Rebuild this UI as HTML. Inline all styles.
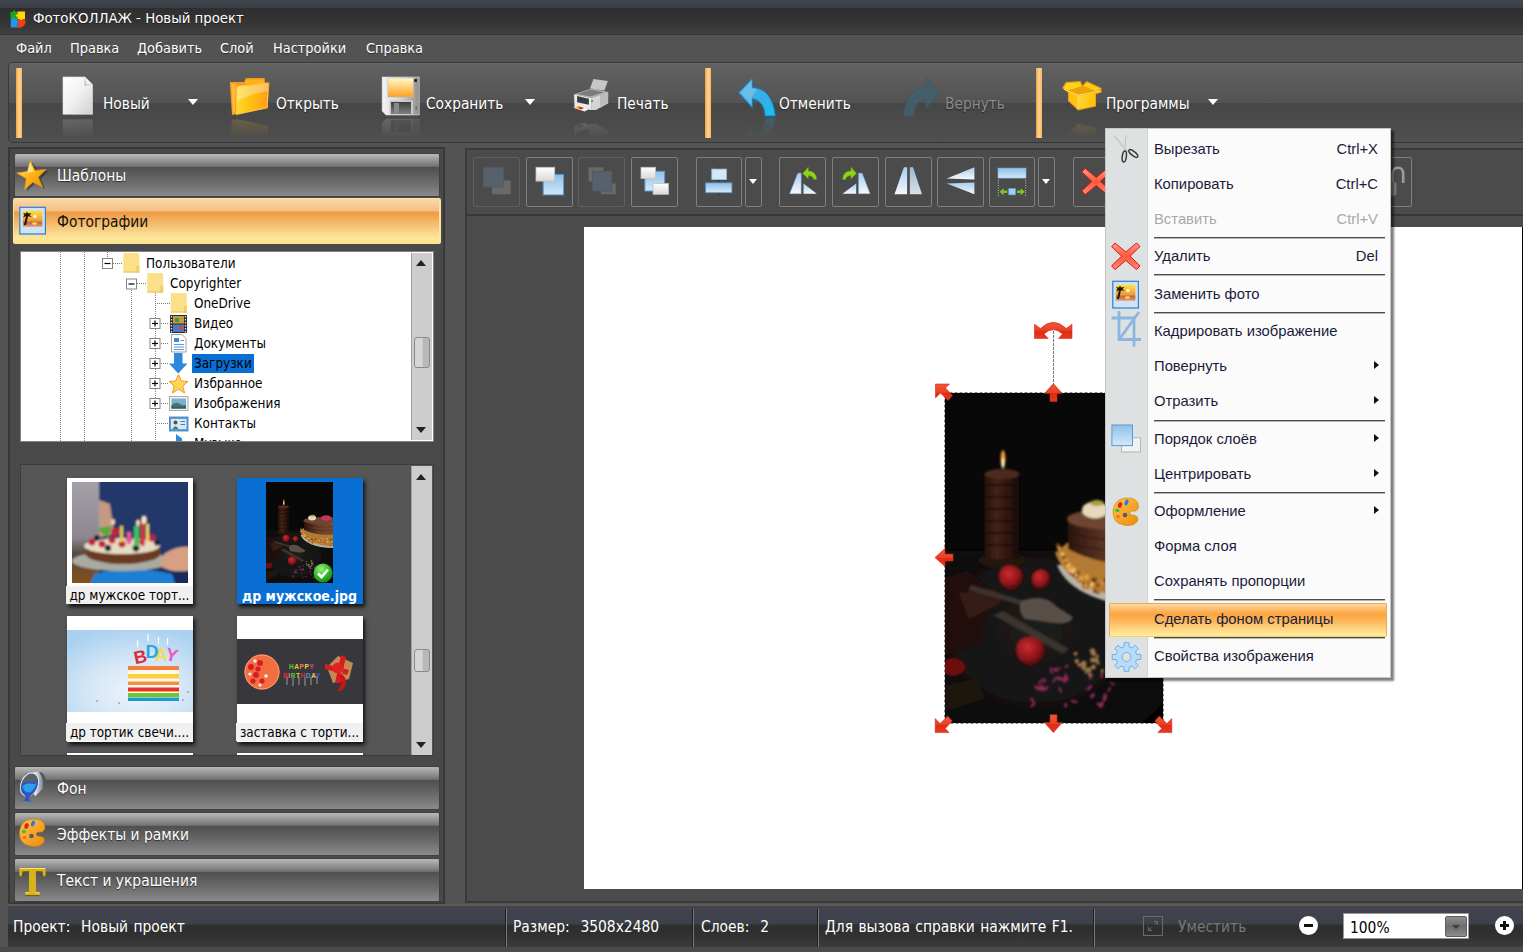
<!DOCTYPE html>
<html lang="ru">
<head>
<meta charset="utf-8">
<title>ФотоКОЛЛАЖ - Новый проект</title>
<style>
html,body{margin:0;padding:0;}
body{width:1523px;height:952px;overflow:hidden;background:#535353;position:relative;font-family:"DejaVu Sans Condensed","DejaVu Sans","Liberation Sans",sans-serif;font-stretch:condensed;font-size:14.4px;color:#fff;}
.abs{position:absolute;}
div,span,svg{position:absolute;box-sizing:border-box;}
.t{white-space:pre;line-height:1;}
/* title */
#topstrip{left:0;top:0;width:1523px;height:8px;background:linear-gradient(#42464f,#3b3d49);}
#title{left:0;top:8px;width:1523px;height:27px;background:linear-gradient(#2e2e2e 0%,#353535 55%,#404040 95%,#343434 96%);}
#menubar{left:0;top:35px;width:1523px;height:28px;background:#535353;}
#menubar .t{top:6px;font-size:14.4px;text-shadow:0 1px 1px rgba(0,0,0,.45);}
/* main toolbar */
#tb{left:8px;top:62px;width:1521px;height:81px;border:1px solid #383838;border-radius:5px;background:linear-gradient(#626262 0%,#535353 50.4%,#464646 50.5%,#505050 100%);box-shadow:inset 0 1px 0 #6a6a6a;}
.obar{top:68px;width:6px;height:70px;background:linear-gradient(90deg,#f0a23c,#ffd596 50%,#f5b563);}
.tbt{font-size:15.3px;top:97px;text-shadow:0 1px 1px rgba(0,0,0,.5);}
.dd{width:0;height:0;border-left:5.5px solid transparent;border-right:5.5px solid transparent;border-top:6px solid #fff;}
/* left panel */
#lp{left:8px;top:147px;width:437px;height:757px;border:2px solid #383838;background:#494949;}
.gbtn{left:14px;width:426px;height:44px;border:1px solid #404040;border-radius:2px;background:linear-gradient(#b8b8b8 0%,#9a9a9a 13%,#737373 29.5%,#4f4f4f 31%,#6a6a6a 66%,#8a8a8a 100%);}
.obtn{left:13px;top:198px;width:428px;height:46px;border-radius:2px;background:linear-gradient(#fad8aa 0%,#f6be84 26%,#ee9a44 31%,#f4b666 52%,#f8d488 74%,#fde89c 90%,#fde284 100%);border:1px solid #fde4a0;border-right-width:2px;}
.bl{left:42px;top:14.500px;font-size:15.4px;text-shadow:0 1px 1px rgba(0,0,0,.6);}
#tree{left:20px;top:251px;width:414px;height:191px;background:#fff;border:1px solid #828282;overflow:hidden;}
.tr{color:#000;font-size:13.4px;margin-top:0px;}
.vd{top:0;width:1px;height:200px;background:repeating-linear-gradient(#888 0 1px,transparent 1px 2px);}
.sb{right:1px;top:1px;width:21px;background:#cdcdcd;border-left:1px solid #a0a0a0;}
.sth{left:2px;width:16px;border:1px solid #8a8a8a;border-radius:3px;background:linear-gradient(90deg,#d6d6d6 50%,#b8b8b8 60%);}
.sa{left:4px;width:0;height:0;border-left:5.5px solid transparent;border-right:5.5px solid transparent;}
.sa.up{border-bottom:6px solid #222;}
.sa.dn{border-top:6px solid #222;}
#thumbs{left:20px;top:464px;width:414px;height:292px;background:#565656;border:1px solid #3c3c3c;overflow:hidden;}
.th{width:126px;height:126px;box-shadow:2px 3px 4px rgba(0,0,0,.8);}
.tl{width:127px;margin-left:-1px;height:18px;font-size:13.4px;color:#000;background:#f0f0f0;text-align:center;padding-top:3px;overflow:hidden;}
/* right panel */
#rp{left:465px;top:148px;width:1070px;height:755px;border:2px solid #3a3a3a;background:#4b4b4b;}
#rtb{left:467px;top:150px;width:1060px;height:66px;border-bottom:2px solid #363636;background:#4b4b4b;}
.b2{top:157px;width:47px;height:50px;border:1px solid #808080;border-radius:2px;}
.b2.dis{border-color:#606060;}
.dd.s{border-left-width:4.5px;border-right-width:4.5px;border-top-width:5px;}
#canvas{left:584px;top:227px;width:938px;height:662px;background:#fff;}
/* status */
#sline{left:8px;top:904px;width:1515px;height:4px;background:linear-gradient(#5a5a5a 50%,#454545 50%);}
#status{left:8px;top:908px;width:1515px;height:39px;background:linear-gradient(#41444f 0%,#3e404b 41%,#303030 43%,#2e2e2e 60%,#3c3c3c 100%);}
.st{margin-left:-8px;top:12px;font-size:15.4px;word-spacing:1px;}
.sd{margin-left:-8px;top:1px;width:2px;height:38px;background:linear-gradient(90deg,#222 50%,#777 50%);}
#fit{left:1135px;top:8px;width:20px;height:20px;border:1px solid #6a6a6a;}
.circ{margin-left:-7px;top:8px;width:19px;height:19px;border-radius:50%;background:#fff;}
#combo{left:1335px;top:5px;width:126px;height:26px;background:#fff;border:1px solid #999;}
#cbtn{right:1px;top:2px;width:22px;height:21px;background:linear-gradient(#8e8e8e,#6c6c6c 50%,#8c8c8c);border:1px solid #5e5e5e;border-radius:2px;}
/* context menu */
#cm{left:1105px;top:128px;width:286px;height:550px;background:#fbfbfb;border:1px solid #c4c4c4;box-shadow:3px 3px 2px rgba(0,0,0,.5);font-family:"Liberation Sans","DejaVu Sans",sans-serif;font-stretch:normal;}
#gut{left:0;top:0;width:42px;height:548px;background:#dde1e1;border-right:1px solid #cfd3d3;}
#hl{left:3px;top:474px;width:278px;height:34px;border:1px solid #e9ad48;border-bottom-color:#f3cf6a;border-radius:2px;background:linear-gradient(#fed8a4 0%,#fdbc6c 16%,#fba540 32%,#fdb85c 55%,#ffd884 80%,#ffec9e 100%);}
.mi{left:48px;font-size:14.8px;color:#1c1c3a;}
.sc{right:12px;font-size:14.8px;color:#1c1c3a;}
.g{color:#a9a9a9;}
.sep{left:48px;width:231px;height:1px;background:#4c4c4c;box-shadow:0 1px 0 rgba(76,76,76,.4);}
.ar{left:267.500px;width:0;height:0;border-top:4.5px solid transparent;border-bottom:4.5px solid transparent;border-left:5px solid #111;}
</style>
</head>
<body>
<div id="topstrip"></div>
<div id="title"><svg style="left:9px;top:1.500px" width="17" height="19" viewBox="9 9.500 17 19">
<path d="M10.500 11.500 H13 Q12.500 9.800 14.200 9.800 Q15.900 9.800 15.400 11.500 H17.500 V18.500 H10.500 Z" fill="#1fa31f"/>
<path d="M17.500 11 H25 V18.500 H22 Q22.500 20 21 20 Q19.500 20 20 18.500 H17.500 V16 Q15.800 16.500 15.800 15 Q15.800 13.500 17.500 14 Z" fill="#ffd800"/>
<path d="M10.800 18.500 H13 Q12.500 17 14 17 Q15.500 17 15 18.500 H17.500 V21 Q19.200 20.500 19.200 22 Q19.200 23.500 17.500 23 V27 H10.800 Z" fill="#1e96ea"/>
<path d="M17.500 18.500 H20 Q19.500 20 21 20 Q22.500 20 22 18.500 H24 Q26.200 19.500 25.500 22 Q24 27 20 27.300 H17.500 V23 Q19.200 23.500 19.200 22 Q19.200 20.500 17.500 21 Z" fill="#f0401a"/>
</svg><span class="t" style="left:33px;top:3px;font-size:14.8px;text-shadow:0 1px 1px rgba(0,0,0,.5);">ФотоКОЛЛАЖ - Новый проект</span></div>
<div id="menubar">
<span class="t" style="left:16px;">Файл</span>
<span class="t" style="left:70px;">Правка</span>
<span class="t" style="left:137px;">Добавить</span>
<span class="t" style="left:220px;">Слой</span>
<span class="t" style="left:273px;">Настройки</span>
<span class="t" style="left:366px;">Справка</span>
</div>
<div id="tb"></div>
<!--TBI-->
<svg id="tbi" style="left:0;top:63px" width="1523" height="79" viewBox="0 63 1523 79">
<defs>
<linearGradient id="gdoc" x1="0" y1="0" x2="1" y2="1"><stop offset="0" stop-color="#fff"/><stop offset=".5" stop-color="#f1f1f1"/><stop offset="1" stop-color="#cfcfcf"/></linearGradient>
<linearGradient id="gfold" x1="0" x2="1"><stop offset="0" stop-color="#ffdb2c"/><stop offset=".45" stop-color="#ffc010"/><stop offset="1" stop-color="#ff9c1e"/></linearGradient>
<linearGradient id="gflp" x1="0" x2="1"><stop offset="0" stop-color="#f4f4f4"/><stop offset=".5" stop-color="#d2d2d2"/><stop offset="1" stop-color="#8e8e8e"/></linearGradient>
<linearGradient id="glab" x1="0" y1="0" x2="0" y2="1"><stop offset="0" stop-color="#fffacc"/><stop offset="1" stop-color="#ffa01e"/></linearGradient>
<linearGradient id="gsh" x1="0" y1="0" x2="0" y2="1"><stop offset="0" stop-color="#3c3c3c"/><stop offset="1" stop-color="#808080"/></linearGradient>
<linearGradient id="gun" x1="0" y1="0" x2="1" y2="1"><stop offset="0" stop-color="#5ab6e6"/><stop offset=".6" stop-color="#35aee6"/><stop offset="1" stop-color="#18c0f4"/></linearGradient>
<linearGradient id="gbox" x1="0" x2="1"><stop offset="0" stop-color="#ffd530"/><stop offset="1" stop-color="#ffc208"/></linearGradient>
<linearGradient id="gfade" x1="0" y1="0" x2="0" y2="1"><stop offset="0" stop-color="#494949" stop-opacity=".55"/><stop offset="1" stop-color="#4e4e4e" stop-opacity="1"/></linearGradient>
<g id="idoc"><path d="M63 77 H85 L92.500 84.500 V114.300 H63 Z" fill="url(#gdoc)" stroke="#e8e8e8" stroke-width=".6"/><path d="M85 77 L92.500 84.500 L84 86 Z" fill="#c9c9c9"/><path d="M85 77.500 L86.500 84 L92 84.500 Z" fill="#f6f6f6"/></g>
<g id="ifold"><path d="M229.800 82 L244 82 L246 78 L264.600 78 L265 82.500 L269.500 82.500 L267.500 108 L232 115 Z" fill="#f8981c"/><path d="M246.500 79.500 L263.500 79.500 L264 83.500 L245 84 Z" fill="#ffb21a"/><path d="M231.200 83.500 L236 84 L235 113 L232.800 113.600 Z" fill="#ffb83a"/><path d="M237 86.300 L268 83.200 L267.300 107.800 L236.300 114.600 Z" fill="url(#gfold)" stroke="#ffcf55" stroke-width=".8"/><path d="M237.500 87 L267.500 83.800 L267.400 91 Q250 94 237 101 Z" fill="#fff" opacity=".32"/></g>
<g id="isave"><path d="M382.200 77 H419.300 V115 H386 L382.200 111 Z" fill="url(#gflp)" stroke="#f2f2f2" stroke-width=".5"/><rect x="387.900" y="78" width="25.600" height="19" fill="url(#glab)" stroke="#b9b9b9" stroke-width=".6"/><rect x="389.500" y="100.500" width="23.500" height="14" fill="#c9c9c9"/><rect x="391" y="102" width="20" height="12" fill="url(#gsh)"/><rect x="394" y="103" width="5" height="10.500" fill="#8a8a8a"/><rect x="414.300" y="79.200" width="2.600" height="2.600" fill="#111"/><rect x="415.600" y="106" width="1.200" height="4" fill="#666"/></g>
<g id="iprn"><path d="M593.400 79.100 L607.800 81 L604.400 90.400 L590 88.500 Z" fill="#c6c6c6"/><path d="M574.100 94.200 L592.300 88.200 L608.100 91.900 L591.100 98 Z" fill="#b4b4b4"/><path d="M577 94 L591 89.600 L604 92.200 L590.500 96.500 Z" fill="#7b7b7b"/><path d="M574.100 94.200 L591.100 98 L591.100 110.100 L574.500 107.100 Z" fill="#e9e9e9"/><path d="M591.100 98 L608.100 91.900 L608.100 103.300 L596 110.100 L591.100 110.100 Z" fill="#d4d4d4"/><path d="M600 95 L608.100 91.900 L608.100 103.300 L600 108 Z" fill="#bcbcbc"/><path d="M577.100 96.100 L588.900 98.700 L588.900 104.700 L577.100 102.300 Z" fill="#3c3c3c"/><path d="M573.300 107.800 L584.700 111.600 L588.500 109.300 L578.600 106 Z" fill="#f4f4f4"/><path d="M575.500 107.500 L581.500 109.600 L584 108 L578.600 106.300 Z" fill="#e6251a"/><path d="M574.800 107.700 L578 108.800 L579.500 106.800 L578 106.400 Z" fill="#ffc21a"/><circle cx="592" cy="101.200" r="1.100" fill="#23b43c"/></g>
<g id="iundo"><path d="M738.600 92.700 L752.600 77.900 L752.600 87.400 Q772 88.500 775.300 115.400 L775.300 116.100 L765.100 116.100 Q764 100.500 752.600 98.700 L752.600 108.200 Z" fill="url(#gun)" stroke="#1d78b4" stroke-width="1"/><path d="M741 92.700 L751.400 81.500 L751.400 88.600 L757 89.200 L751.400 97.600 L751.400 104.500 Z" fill="#8cc6ea" opacity=".55"/></g>
<g id="iredo"><path d="M940 92.700 L926 77.900 L926 87.400 Q906.600 88.500 903.300 115.400 L903.300 116.100 L913.500 116.100 Q914.600 100.500 926 98.700 L926 108.200 Z" fill="#41616e" stroke="#3c5866" stroke-width="1" opacity=".85"/></g>
<g id="ibox"><path d="M1062 88 L1066 82 L1080.500 81 L1082.500 85.500 L1086.500 81 L1101.500 88 L1101.500 92.500 L1096 94 L1096 106.500 L1078 110.500 L1068 101 L1068 92.500 Z" fill="#f1a20e"/><path d="M1063.500 88 L1066.800 83.200 L1079.700 82.300 L1081.600 86 L1073.200 88.900 L1068 90 Z" fill="#ffd21e"/><path d="M1083.600 85.800 L1086.800 82.500 L1100 88.600 L1096.400 91.600 Z" fill="#ffce14"/><path d="M1073.200 88.900 L1082.300 86.200 L1093 90.400 L1082.300 93.500 Z" fill="#e9a600"/><path d="M1069.200 92.300 L1078.100 95.700 L1078.100 109 L1069.200 100.500 Z" fill="#ffc410"/><path d="M1078.100 95.700 L1095 93.200 L1095 105.800 L1078.100 109 Z" fill="url(#gbox)"/><path d="M1078.100 95.700 L1078.100 109" stroke="#ffe98a" stroke-width=".8"/><path d="M1064 89.200 L1078.100 95.300 L1100.500 91.200" stroke="#ffe070" stroke-width="1" fill="none"/></g>
</defs>
<use href="#idoc"/><use href="#ifold"/><use href="#isave"/><use href="#iprn"/><use href="#iundo"/><use href="#iredo"/><use href="#ibox"/>
<g opacity=".45">
<use href="#idoc" transform="translate(0 234) scale(1 -1)"/>
<use href="#ifold" transform="translate(0 234) scale(1 -1)"/>
<use href="#isave" transform="translate(0 234) scale(1 -1)"/>
<use href="#iprn" transform="translate(0 234) scale(1 -1)"/>
<use href="#iundo" transform="translate(0 234) scale(1 -1)"/>
<use href="#iredo" transform="translate(0 234) scale(1 -1)" opacity=".5"/>
<use href="#ibox" transform="translate(0 234) scale(1 -1)"/>
</g>
<rect x="50" y="116.500" width="1070" height="21" fill="url(#gfade)"/>
<rect x="50" y="137" width="1070" height="5" fill="#4f4f4f"/>
</svg>
<!--TBIEND-->
<div class="obar" style="left:16px"></div>
<div class="obar" style="left:704.500px"></div>
<div class="obar" style="left:1036px"></div>
<span class="t tbt" style="left:103px">Новый</span>
<span class="t tbt" style="left:276px">Открыть</span>
<span class="t tbt" style="left:426px">Сохранить</span>
<span class="t tbt" style="left:617px">Печать</span>
<span class="t tbt" style="left:779px">Отменить</span>
<span class="t tbt" style="left:945px;color:#8b8b8b">Вернуть</span>
<span class="t tbt" style="left:1106px">Программы</span>
<div class="dd" style="left:188px;top:99px"></div>
<div class="dd" style="left:525px;top:99px"></div>
<div class="dd" style="left:1208px;top:99px"></div>
<div id="lp"></div>
<div class="gbtn" style="top:153px"><span class="t bl">Шаблоны</span></div>
<div class="obtn"><span class="t bl" style="color:#111;text-shadow:none;left:43px;top:16px">Фотографии</span></div>
<div class="gbtn" style="top:766px"><span class="t bl">Фон</span></div>
<div class="gbtn" style="top:812px"><span class="t bl">Эффекты и рамки</span></div>
<div class="gbtn" style="top:858px"><span class="t bl">Текст и украшения</span></div>
<!--LPI-->
<svg id="lpi" style="left:10px;top:150px" width="60" height="752" viewBox="10 150 60 752">
<defs>
<linearGradient id="gstar" x1="0" y1="0" x2="1" y2="1"><stop offset="0" stop-color="#ffe270"/><stop offset=".5" stop-color="#ffb21a"/><stop offset="1" stop-color="#e88a08"/></linearGradient>
<linearGradient id="gsun" x1="0" y1="0" x2="0" y2="1"><stop offset="0" stop-color="#ffe23a"/><stop offset=".6" stop-color="#f59a3c"/><stop offset=".75" stop-color="#b86a4a"/><stop offset="1" stop-color="#e6a070"/></linearGradient>
<linearGradient id="gpal" x1="0" y1="0" x2="1" y2="1"><stop offset="0" stop-color="#ffc44a"/><stop offset="1" stop-color="#ee8a0a"/></linearGradient>
<linearGradient id="gbk" x1="0" y1="0" x2="1" y2="0"><stop offset="0" stop-color="#5c6a74"/><stop offset=".5" stop-color="#dfe5ea"/><stop offset="1" stop-color="#5a626a"/></linearGradient>
<g id="ipal"><path d="M32 819 Q45 818 45 828 Q44 833 38 832 Q35 833 37 836 Q46 836 44 842 Q40 848 30 846 Q19 844 19.500 832 Q21 820 32 819 Z" fill="url(#gpal)" stroke="#c87808" stroke-width=".6"/><ellipse cx="31.500" cy="836" rx="2.300" ry="2.200" fill="#5a5a5a"/><ellipse cx="26.500" cy="826" rx="2" ry="3" fill="#d8281e" transform="rotate(20 26.500 826)"/><ellipse cx="33" cy="823.500" rx="1.800" ry="3" fill="#2a7ae0" transform="rotate(20 33 823.500)"/><ellipse cx="23.800" cy="831.500" rx="2" ry="1.800" fill="#2cc23a"/><ellipse cx="24.500" cy="837.500" rx="1.800" ry="1.500" fill="#f4682a"/></g>
<g id="iph"><rect x="19.800" y="207.300" width="25.600" height="26.700" fill="#cfe3f8" stroke="#2a7fd6" stroke-width="1.200"/><rect x="22.800" y="210.800" width="19.600" height="16" fill="url(#gsun)"/><circle cx="35" cy="216.500" r="1.800" fill="#fff7d8"/><ellipse cx="34.500" cy="223.500" rx="2.500" ry="1.200" fill="#ffd84a"/><path d="M24 225 L26 216 L23.200 217.500 L24.500 214.500 L23 213 L26 213.500 L27 211.500 L28 213.600 L31.500 213 L29.500 215 L31.800 217 L28 216.200 L26 225 Z" fill="#1c120a"/></g>
</defs>
<path d="M30.100 160.600 L35.100 170.500 L46 169.400 L38.200 177.200 L42.600 187.300 L32.800 182.300 L24.500 189.600 L26.300 178.700 L16.800 173 L27.700 171.400 Z" fill="rgba(0,0,0,.35)" transform="translate(2.500 1.500)"/>
<path d="M30.100 160.600 L35.100 170.500 L46 169.400 L38.200 177.200 L42.600 187.300 L32.800 182.300 L24.500 189.600 L26.300 178.700 L16.800 173 L27.700 171.400 Z" fill="url(#gstar)" stroke="#e89a10" stroke-width=".7"/>
<path d="M30.100 162.500 L33.800 171.800 L28 172.600 L20 173.600 L27.200 172 Z" fill="#fff3b0" opacity=".7"/>
<use href="#iph"/>
<!-- bucket -->
<path d="M25 773.500 L39 771.500 Q47.500 774.500 45.500 786 L35 796.500 Z" fill="url(#gbk)"/>
<path d="M41.500 772.500 Q46.800 776 45.200 785.500 L42.500 788.500 Q44.500 779 39 772 Z" fill="#4e565e"/>
<ellipse cx="29.500" cy="784.500" rx="8.500" ry="12" transform="rotate(24 29.500 784.500)" fill="#56626c" stroke="#dfe5ea" stroke-width="1"/>
<path d="M21.300 786 Q24 781 30 782 Q36 783.500 38 780 Q38 789 32.500 794 Q29 796.500 28.500 798 Q29 800 32.500 801.500 L22.500 801 Q26.500 799 25.500 796 Q20.500 792 21.300 786 Z" fill="#2a55cc"/>
<path d="M22.500 786.500 Q25 783 30 783.500 Q34 784.500 36.500 783 Q35 789 30 792.500 Q24 793 22.500 786.500 Z" fill="#2f9fe8"/>
<use href="#ipal"/>
</svg>
<span class="t" id="bigT" style="left:19px;top:861.500px;font-family:'Liberation Serif','DejaVu Serif',serif;font-stretch:normal;font-weight:bold;font-size:40px;color:#d9b21a;text-shadow:0 -1px 0 #f7e27a,0 1px 1px #7a5c00;">T</span>
<!--LPIEND-->
<div id="tree">
<div class="vd" style="left:39px"></div><div class="vd" style="left:63px"></div><div class="vd" style="left:110px;top:30px"></div><div class="vd" style="left:134px;top:41px"></div>
<!--TRI-->
<svg id="tri" style="left:0;top:0" width="390" height="189" viewBox="21 252 390 189">
<defs>
<g id="fld"><path d="M0 0 H14 Q16 0 16 2 V19.500 H0 Z" fill="#fbe089"/><path d="M13 12.500 H16 V19.500 H13 Z" fill="#f3cf6a"/><path d="M0 18.500 H16 V19.500 H0 Z" fill="#e9c25a"/></g>
<g id="pbox"><rect x=".5" y=".5" width="10" height="10" fill="#fff" stroke="#848484"/><path d="M2.500 5.500 H8.500" stroke="#000" stroke-width="1.200"/></g>
<g id="plus"><use href="#pbox"/><path d="M5.500 2.500 V8.500" stroke="#000" stroke-width="1.200"/></g>
</defs>
<g stroke="#7a7a7a" stroke-width="1" stroke-dasharray="1 1">
<path d="M107.500 252 V258"/><path d="M113 263.500 H122"/><path d="M137 283.500 H146"/><path d="M155 303.500 H170"/>
<path d="M161 323.500 H169"/><path d="M161 343.500 H169"/><path d="M161 363.500 H169"/><path d="M161 383.500 H169"/><path d="M161 403.500 H169"/><path d="M155 423.500 H169"/>
</g>
<use href="#fld" x="123.300" y="253"/><use href="#fld" x="147.200" y="273"/><use href="#fld" x="170.800" y="293"/>
<use href="#pbox" x="102" y="258"/><use href="#pbox" x="126" y="278.500"/>
<use href="#plus" x="149.500" y="318"/><use href="#plus" x="149.500" y="338"/><use href="#plus" x="149.500" y="358"/><use href="#plus" x="149.500" y="378"/><use href="#plus" x="149.500" y="398"/>
<!-- video -->
<rect x="170" y="315" width="17" height="18" fill="#2a2a2a"/><rect x="173" y="316" width="11" height="7.500" fill="#c89a3a"/><rect x="173" y="324.500" width="11" height="7.500" fill="#4a7ad0"/><rect x="175" y="318" width="4" height="4" fill="#3a9a4a"/><rect x="179" y="326" width="4" height="4" fill="#d04a3a"/>
<path d="M171.500 316 V333 M185.500 316 V333" stroke="#ddd" stroke-width="1.400" stroke-dasharray="1.500 1.500"/>
<!-- doc -->
<path d="M171.500 334.500 H182 L186 338.500 V352 H171.500 Z" fill="#fdfdfd" stroke="#8a8a8a" stroke-width=".8"/><rect x="174" y="338" width="5" height="4" fill="#3a8ad8"/><path d="M174 344.500 H184 M174 347 H184 M174 349.500 H184 M180.500 340.500 H184" stroke="#5a9ad8" stroke-width="1"/>
<!-- download -->
<path d="M174 353 H182.500 V363.500 H187.500 L178.200 373.500 L169 363.500 H174 Z" fill="#2f88de"/>
<!-- star -->
<path d="M178.500 374.500 L181.300 381 L188 381.500 L182.800 386 L184.600 393 L178.500 389.200 L172.400 393 L174.200 386 L169 381.500 L175.700 381 Z" fill="#ffd45a" stroke="#f09a1e" stroke-width="1"/>
<!-- pictures -->
<rect x="169.500" y="396.500" width="18.500" height="14" fill="#f2f2f2" stroke="#9a9a9a" stroke-width=".8"/><rect x="171.500" y="398.500" width="14.500" height="10" fill="#7ab0d8"/><path d="M171.500 405 Q176 401 180 404 Q184 406 186 404.500 V408.500 H171.500 Z" fill="#4a7a5a"/><rect x="171.500" y="406.500" width="14.500" height="2" fill="#3a5a7a"/>
<!-- contacts -->
<rect x="169.500" y="417" width="18.500" height="14" fill="#5a9fd8" stroke="#3a7ab8" stroke-width=".8"/><rect x="171" y="419" width="15.500" height="10" fill="#d8e8f6"/><circle cx="175.500" cy="422.500" r="2" fill="#6a4a3a"/><path d="M172.500 429 Q175.500 423.500 178.500 429 Z" fill="#3a8a4a"/><path d="M180.500 421.500 H185 M180.500 424.500 H185" stroke="#4a7ab8" stroke-width="1.200"/>
<!-- music -->
<path d="M176 434 L182 438.500 L182 441 L176 441 Z" fill="#2f88de"/>
</svg>
<!--TRIEND-->
<span class="t tr" style="left:125px;top:5px">Пользователи</span>
<span class="t tr" style="left:149px;top:25px">Copyrighter</span>
<span class="t tr" style="left:173px;top:45px">OneDrive</span>
<span class="t tr" style="left:173px;top:65px">Видео</span>
<span class="t tr" style="left:173px;top:85px">Документы</span>
<div style="left:171px;top:102px;width:62px;height:19px;background:#0a6fd3"></div>
<span class="t tr" style="left:173px;top:105px;">Загрузки</span>
<span class="t tr" style="left:173px;top:125px">Избранное</span>
<span class="t tr" style="left:173px;top:145px">Изображения</span>
<span class="t tr" style="left:173px;top:165px">Контакты</span>
<span class="t tr" style="left:173px;top:185px">Музыка</span>
<div class="sb" style="height:187px"><div class="sa up" style="top:7px"></div><div class="sth" style="top:84px;height:31px"></div><div class="sa dn" style="bottom:7px"></div></div>
</div>
<div id="thumbs">
<div class="th" style="left:46px;top:13px;background:#fff"></div>
<div class="th" style="left:216px;top:13px;background:#0a6fd3"></div>
<div class="th" style="left:46px;top:151px;background:#fff"></div>
<div class="th" style="left:216px;top:151px;background:#fff"></div>
<div class="th" style="left:46px;top:288px;background:#fff;height:10px"></div>
<div class="th" style="left:216px;top:288px;background:#fff;height:10px"></div>
<!--THS-->
<svg style="left:51px;top:17px" width="116" height="101" viewBox="0 0 116 101">
<defs><filter id="tb1" x="-10%" y="-10%" width="120%" height="120%"><feGaussianBlur stdDeviation="1.1"/></filter>
<linearGradient id="wl" x1="0" y1="0" x2="0" y2="1"><stop offset="0" stop-color="#a7a1aa"/><stop offset=".55" stop-color="#8d8890"/><stop offset=".7" stop-color="#55483c"/><stop offset="1" stop-color="#8a5218"/></linearGradient></defs>
<rect width="116" height="101" fill="#1f3564"/>
<g filter="url(#tb1)">
<rect x="-3" y="-3" width="30" height="107" fill="url(#wl)"/>
<path d="M27 -3 H120 V72 H60 L27 50 Z" fill="#20376a"/>
<path d="M27 18 L38 22 L42 52 L27 56 Z" fill="#c49a84"/>
<path d="M70 78 H120 V104 H60 Z" fill="#172c5c"/>
<path d="M22 92 Q60 82 100 92 L104 104 H18 Z" fill="#1b7fd2"/>
<ellipse cx="50" cy="79" rx="50" ry="10" fill="#a9aaa2"/>
<path d="M92 72 Q108 62 120 66 V88 Q100 92 88 84 Z" fill="#d6a084"/>
<ellipse cx="51" cy="71" rx="38" ry="11" fill="#6a3b20"/>
<ellipse cx="50" cy="64" rx="38" ry="8" fill="#e6dcc2"/>
<g fill="#c2203a"><circle cx="20" cy="60" r="3.500"/><circle cx="30" cy="62" r="3.500"/><circle cx="40" cy="58" r="3.500"/><circle cx="50" cy="62" r="3.500"/><circle cx="43" cy="50" r="4"/><circle cx="80" cy="56" r="3.500"/><circle cx="70" cy="60" r="3"/></g>
<g fill="#1e2233"><circle cx="25" cy="56" r="3"/><circle cx="36" cy="66" r="3.200"/><circle cx="57" cy="57" r="3"/><circle cx="64" cy="66" r="3.400"/><circle cx="85" cy="61" r="2.800"/></g>
<path d="M24 46 L40 44 L36 56 Z" fill="#5aa83a"/>
<rect x="62" y="44" width="5" height="20" fill="#3fc05a"/><rect x="69" y="40" width="3.500" height="24" fill="#d83a3a"/><rect x="74" y="42" width="3" height="18" fill="#f0d060"/><rect x="48" y="44" width="3" height="16" fill="#e8c83a"/><rect x="55" y="50" width="4" height="12" fill="#e85a9a"/>
<ellipse cx="72" cy="38" rx="2.500" ry="4" fill="#ffe6c0"/><ellipse cx="66" cy="41" rx="1.800" ry="3" fill="#ffe6c0"/><ellipse cx="41" cy="40" rx="1.800" ry="3" fill="#ffd8b0"/>
</g>
</svg>
<svg style="left:245px;top:17px" width="67" height="101" viewBox="0 0 218 330" preserveAspectRatio="none"><use href="#phc"/></svg>
<svg style="left:292px;top:98px" width="20" height="20" viewBox="0 0 20 20"><defs><radialGradient id="gck" cx="40%" cy="30%" r="75%"><stop offset="0" stop-color="#9af07a"/><stop offset=".6" stop-color="#2db52a"/><stop offset="1" stop-color="#128a18"/></radialGradient></defs><circle cx="10" cy="10" r="9.500" fill="url(#gck)"/><path d="M5 10.500 L8.500 14 L15 6.500" fill="none" stroke="#fff" stroke-width="2.600"/></svg>
<svg style="left:46px;top:165px" width="126" height="82" viewBox="0 0 126 82">
<defs><radialGradient id="sky" cx="55%" cy="75%" r="80%"><stop offset="0" stop-color="#eef4fa"/><stop offset=".5" stop-color="#d3e6f6"/><stop offset="1" stop-color="#a9d0f0"/></radialGradient><filter id="tb3"><feGaussianBlur stdDeviation=".5"/></filter></defs>
<rect width="126" height="82" fill="url(#sky)"/>
<g filter="url(#tb3)">
<rect x="61" y="36" width="51" height="35" rx="2" fill="#fff8ee"/>
<rect x="61" y="36" width="51" height="4" fill="#f0803a"/><rect x="61" y="44" width="51" height="4.500" fill="#f8d23a"/><rect x="61" y="51.500" width="51" height="3.500" fill="#f4903a"/><rect x="61" y="57.500" width="51" height="4" fill="#e8322a"/><rect x="61" y="63" width="51" height="4" fill="#6ac82a"/><rect x="61" y="67.500" width="51" height="3.500" fill="#1a9ad0"/>
<g fill="#e04a6a"><circle cx="30" cy="71" r=".8"/><circle cx="52" cy="73" r=".8"/><circle cx="116" cy="70" r=".8"/><circle cx="121" cy="62" r=".8"/></g>
</g>
<g font-family="'Liberation Sans',sans-serif" font-stretch="normal" font-weight="bold" font-size="18"><text x="67" y="33" fill="#e0283c" transform="rotate(-12 73 28)">B</text><text x="78.500" y="27.500" fill="#2aa8dc">D</text><text x="88" y="30.500" fill="#f6d85a">A</text><text x="98.500" y="31" fill="#ee5ab8" transform="rotate(14 104 26)">Y</text></g>
<g stroke="#fff" stroke-width="1.200"><path d="M70.500 10 V17 M81 4 V11 M91.500 7 V14 M100.500 8 V15"/></g>
</svg>
<svg style="left:216px;top:174px" width="126" height="65" viewBox="0 0 126 65">
<defs><filter id="tb4"><feGaussianBlur stdDeviation=".6"/></filter></defs>
<rect width="126" height="65" fill="#38383c"/>
<g filter="url(#tb4)">
<circle cx="25" cy="33" r="17.500" fill="#f26e40"/><circle cx="25" cy="33" r="17" fill="none" stroke="#f6a078" stroke-width="1"/>
<g fill="#d81e24"><circle cx="14" cy="28" r="3"/><circle cx="19" cy="36" r="3"/><circle cx="23" cy="24" r="3"/><circle cx="16" cy="42" r="2.600"/><circle cx="25" cy="42" r="2.600"/><circle cx="21" cy="30" r="2.600"/></g>
<g fill="#e8f0f4"><circle cx="18" cy="22" r="1.800"/><circle cx="29" cy="37" r="1.800"/><circle cx="13" cy="35" r="1.600"/><circle cx="23" cy="46" r="1.600"/></g>
<path d="M101 17 L116 24 L112 40 L96 44 L90 28 Z" fill="#c48a56"/>
<path d="M88 25 L112 31 L110 36 L88 30 Z M104 16 L98 44 L103 44 L109 18 Z" fill="#d81c1c"/><circle cx="101" cy="29" r="5.500" fill="#e02020"/><path d="M100 36 Q108 44 100 52 L104 52 Q113 44 106 36 Z" fill="#c81818"/>
<g stroke="#9a9aa0" stroke-width="1"><path d="M50 38 V46 M56 38 V47 M62 38 V46 M68 38 V47 M74 38 V46 M80 37 V45"/></g>
</g>
<g font-family="'Liberation Sans',sans-serif" font-stretch="normal" font-weight="bold" font-size="6.500" letter-spacing=".6"><text x="52" y="30"><tspan fill="#5ac83a">H</tspan><tspan fill="#e8c83a">A</tspan><tspan fill="#e8883a">P</tspan><tspan fill="#e8d83a">P</tspan><tspan fill="#e03ab8">Y</tspan></text><text x="46" y="39"><tspan fill="#e0283c">B</tspan><tspan fill="#e88ab8">I</tspan><tspan fill="#5ac83a">R</tspan><tspan fill="#e8c83a">T</tspan><tspan fill="#e0283c">H</tspan><tspan fill="#3a9ae0">D</tspan><tspan fill="#e8d83a">A</tspan><tspan fill="#3a5ae0">Y</tspan></text></g>
</svg>
<!--THSEND-->
<span class="t tl" style="left:46px;top:121px">др мужское торт...</span>
<span class="t tl" style="left:216px;top:121px;color:#fff;font-weight:bold;background:none;font-size:14px">др мужское.jpg</span>
<span class="t tl" style="left:46px;top:258px">др тортик свечи....</span>
<span class="t tl" style="left:216px;top:258px">заставка с торти...</span>
<div class="sb" style="height:290px"><div class="sa up" style="top:8px"></div><div class="sth" style="top:183px;height:23px"></div><div class="sa dn" style="bottom:8px"></div></div>
</div>
<!--LEFTEND-->
<div id="rp"></div>
<div id="rtb"></div>
<div class="b2 dis" style="left:473px"></div>
<div class="b2" style="left:526px"></div>
<div class="b2 dis" style="left:578px"></div>
<div class="b2" style="left:631px"></div>
<div class="b2" style="left:696px;width:46px"></div><div class="b2" style="left:745px;width:17px"><div class="dd s" style="left:3px;top:20.500px"></div></div>
<div class="b2" style="left:779px"></div>
<div class="b2" style="left:832px"></div>
<div class="b2" style="left:885px"></div>
<div class="b2" style="left:937px"></div>
<div class="b2" style="left:989px;width:46px"></div><div class="b2" style="left:1038px;width:17px"><div class="dd s" style="left:3px;top:20.500px"></div></div>
<div class="b2" style="left:1073px"></div>
<div class="b2" style="left:1365px"></div>
<!--TB2I-->
<svg id="tb2i" style="left:468px;top:150px" width="960" height="64" viewBox="468 150 960 64">
<defs>
<linearGradient id="gbl" x1="0" y1="0" x2="0" y2="1"><stop offset="0" stop-color="#8fc0ea"/><stop offset="1" stop-color="#d4e8f8"/></linearGradient>
<linearGradient id="gwh" x1="0" y1="0" x2="0" y2="1"><stop offset="0" stop-color="#fff"/><stop offset="1" stop-color="#d9d9d9"/></linearGradient>
<linearGradient id="gtr" x1="0" y1="0" x2="0" y2="1"><stop offset="0" stop-color="#a9cdee"/><stop offset="1" stop-color="#f4f9fe"/></linearGradient>
<linearGradient id="gx" x1="0" y1="0" x2="0" y2="1"><stop offset="0" stop-color="#ff9a88"/><stop offset=".5" stop-color="#ff5a3a"/><stop offset="1" stop-color="#ff8a78"/></linearGradient>
</defs>
<!-- b1 disabled -->
<rect x="492" y="180.500" width="18.700" height="13.800" fill="#696969"/><rect x="483.400" y="167.300" width="20" height="19.700" fill="#57616b" stroke="#4f5964" stroke-width=".8"/>
<!-- b2 -->
<rect x="543.200" y="174.600" width="20.300" height="20.300" fill="url(#gbl)" stroke="#5b9ad2" stroke-width="1"/><rect x="536" y="167.300" width="18.700" height="13.800" fill="url(#gwh)" stroke="#c2c2c2" stroke-width=".8"/>
<!-- b3 disabled -->
<rect x="588.500" y="167.300" width="15" height="14.200" fill="#696969"/><rect x="601" y="183.500" width="14.700" height="10.800" fill="#696969"/><rect x="592.500" y="171.300" width="19.300" height="19.700" fill="#57616b" stroke="#4f5964" stroke-width=".8"/>
<!-- b4 -->
<rect x="644.900" y="171.300" width="19.700" height="19.700" fill="url(#gbl)" stroke="#5b9ad2" stroke-width="1"/><rect x="641" y="167.300" width="14.500" height="11.300" fill="url(#gwh)" stroke="#c2c2c2" stroke-width=".8"/><rect x="653.100" y="183.500" width="15.400" height="10.800" fill="url(#gwh)" stroke="#c2c2c2" stroke-width=".8"/>
<!-- b5 -->
<line x1="718.700" y1="167" x2="718.700" y2="196" stroke="#333" stroke-width="1"/><rect x="711.800" y="169.100" width="14.600" height="10.400" fill="#d3e8f6" stroke="#9cc4e4" stroke-width=".8"/><rect x="705.700" y="182.900" width="26.200" height="9.800" fill="url(#gbl)" stroke="#5b9ad2" stroke-width=".8"/>
<!-- b6 rotate left -->
<path d="M789.700 193.700 L797.900 173.200 L801.100 173.200 L801.100 193.700 Z" fill="url(#gtr)" stroke="#8fb6da" stroke-width=".5"/><path d="M803.500 183.500 L803.500 193.700 L816.800 193.700 Z" fill="url(#gtr)"/>
<path d="M802.800 173.400 L808.200 167.200 L808.200 171 Q816 171 816.600 179.400 L813.800 179.400 Q812.800 175.600 808.200 175.600 L808.200 178.800 Z" fill="#8fd11c" stroke="#6aa80e" stroke-width=".5"/>
<!-- b7 rotate right -->
<path d="M870 193.700 L862.100 173.200 L858.600 173.200 L858.600 193.700 Z" fill="url(#gtr)" stroke="#8fb6da" stroke-width=".5"/><path d="M856.200 183.500 L856.200 193.700 L842.500 193.700 Z" fill="url(#gtr)"/>
<path d="M856.400 173.400 L851 167.200 L851 171 Q843.200 171 842.600 179.400 L845.400 179.400 Q846.400 175.600 851 175.600 L851 178.800 Z" fill="#8fd11c" stroke="#6aa80e" stroke-width=".5"/>
<!-- b8 flip h -->
<path d="M894.500 194.300 L903.900 167.300 L907.100 167.300 L907.100 194.300 Z" fill="url(#gtr)"/><path d="M909.800 167.300 L913 167.300 L922 194.300 L909.800 194.300 Z" fill="url(#gtr)" opacity=".85"/>
<!-- b9 flip v -->
<path d="M946.800 178.600 L974.400 167.300 L974.400 179.500 Z" fill="url(#gtr)"/><path d="M946.800 183.500 L974.400 182.500 L974.400 194.300 Z" fill="url(#gtr)"/>
<!-- b10 fit -->
<rect x="998" y="168.100" width="28" height="10" fill="url(#gbl)" stroke="#7cb4e2" stroke-width=".6"/><line x1="998.400" y1="180" x2="998.400" y2="196" stroke="#bbb" stroke-width="1" stroke-dasharray="1 1.500"/><line x1="1025.600" y1="180" x2="1025.600" y2="196" stroke="#bbb" stroke-width="1" stroke-dasharray="1 1.500"/><rect x="1008.700" y="188.400" width="6.900" height="6.500" fill="#9fd0f4" stroke="#5b9ad2" stroke-width=".6"/>
<path d="M999.400 191.700 L1003.600 188.200 L1003.600 190.400 L1007.300 190.400 L1007.300 193 L1003.600 193 L1003.600 195.200 Z" fill="#7cc81a"/><path d="M1024.900 191.700 L1020.700 188.200 L1020.700 190.400 L1017 190.400 L1017 193 L1020.700 193 L1020.700 195.200 Z" fill="#7cc81a"/>
<!-- b11 X -->
<path d="M1085.200 168.400 L1096.200 177.600 L1107.200 168.400 L1110.600 172 L1100.400 181.400 L1110.600 190.800 L1107.200 194.600 L1096.200 185.400 L1085.200 194.600 L1081.800 190.800 L1092 181.400 L1081.800 172 Z" fill="url(#gx)" stroke="#d81616" stroke-width="1"/>
<!-- lock -->
<path d="M1392.600 184 V174 Q1392.600 167.800 1398 167.800 Q1403.200 167.800 1403.200 174 V183" fill="none" stroke="#9a9a9a" stroke-width="2.600"/><rect x="1379" y="182" width="17.400" height="13.700" rx="2" fill="#7c7c7c"/>
</svg>
<!--TB2IEND-->
<div id="canvas"></div><div style="left:1522px;top:227px;width:1px;height:662px;background:#000"></div>
<svg id="photo" style="left:945px;top:393px" width="218" height="330" viewBox="0 0 218 330">
<defs>
<filter id="bl1" x="-20%" y="-20%" width="140%" height="140%"><feGaussianBlur stdDeviation="1.2"/></filter>
<filter id="bl3" x="-30%" y="-30%" width="160%" height="160%"><feGaussianBlur stdDeviation="4"/></filter>
<linearGradient id="tfade" x1="0" y1="0" x2="0" y2="1"><stop offset="0" stop-color="#020202" stop-opacity=".0"/><stop offset=".3" stop-color="#020202" stop-opacity=".0"/><stop offset="1" stop-color="#020202" stop-opacity="0"/></linearGradient>
<radialGradient id="tbl" cx="42%" cy="40%" r="70%"><stop offset="0" stop-color="#1f1d1c"/><stop offset=".5" stop-color="#131212"/><stop offset="1" stop-color="#040404"/></radialGradient>
<linearGradient id="cnd" x1="0" x2="1"><stop offset="0" stop-color="#24100b"/><stop offset=".35" stop-color="#472217"/><stop offset="1" stop-color="#160906"/></linearGradient>
<radialGradient id="stw" cx="40%" cy="35%" r="70%"><stop offset="0" stop-color="#c92c30"/><stop offset=".6" stop-color="#8e1418"/><stop offset="1" stop-color="#380606"/></radialGradient>
<linearGradient id="ck" x1="0" x2="1"><stop offset="0" stop-color="#2b150d"/><stop offset=".5" stop-color="#6a3f2a"/><stop offset="1" stop-color="#7a4a33"/></linearGradient>
<g id="phc">
<rect width="218" height="330" fill="#080808"/>
<rect x="-10" y="158" width="240" height="200" fill="url(#tbl)" filter="url(#bl3)"/>
<g filter="url(#bl1)">
<!-- candle -->
<ellipse cx="57" cy="167" rx="24" ry="8" fill="#24120d"/>
<rect x="39.500" y="80" width="35" height="86" fill="url(#cnd)"/>
<path d="M40 92 H74 M40 104 H74 M40 116 H74 M40 128 H74 M40 140 H74 M40 152 H74" stroke="#1c0c08" stroke-width="2.500" opacity=".6"/>
<ellipse cx="57" cy="81" rx="17.500" ry="5" fill="#4e2a1d"/>
<ellipse cx="58" cy="66" rx="2.400" ry="9" fill="#f29a30"/>
<ellipse cx="58" cy="70" rx="1.500" ry="5" fill="#ffeebb"/>
<!-- cake -->
<path d="M112 172 Q128 212 218 216 L218 172 Z" fill="#b8b2a6"/>
<path d="M110 160 Q126 204 218 210 L218 150 L122 150 Z" fill="#b27a30"/>
<path d="M123 128 Q128 118 170 116 L218 116 L218 172 Q160 176 123 156 Z" fill="url(#ck)"/>
<ellipse cx="172" cy="126" rx="50" ry="11" fill="#6e4430"/>
<path d="M124 140 Q170 152 218 146 M124 150 Q170 163 218 157" stroke="#24110a" stroke-width="1.800" fill="none" opacity=".55"/>
<ellipse cx="150" cy="117" rx="13" ry="8.500" fill="#e6d8b8"/>
<ellipse cx="152" cy="110" rx="7" ry="3" fill="#a8a040"/>
<ellipse cx="196" cy="118" rx="18" ry="9" fill="#c8325e"/>
<circle cx="125.3" cy="177.4" r="2.3" fill="#8a4a14"/><circle cx="129.6" cy="182.7" r="1.8" fill="#c88030"/><circle cx="133.8" cy="188.5" r="1.5" fill="#c88030"/><circle cx="161.2" cy="187.4" r="2.5" fill="#6a3810"/><circle cx="149.1" cy="187.0" r="2.6" fill="#6a3810"/><circle cx="141.7" cy="187.0" r="2.0" fill="#6a3810"/><circle cx="119.2" cy="164.8" r="2.1" fill="#c88030"/><circle cx="139.8" cy="193.3" r="2.6" fill="#8a4a14"/><circle cx="125.0" cy="176.8" r="1.6" fill="#e0a04a"/><circle cx="122.9" cy="170.7" r="1.7" fill="#6a3810"/><circle cx="139.8" cy="192.1" r="2.5" fill="#e0a04a"/><circle cx="127.4" cy="177.5" r="2.4" fill="#6a3810"/><circle cx="138.3" cy="191.0" r="1.5" fill="#6a3810"/><circle cx="120.3" cy="167.8" r="2.3" fill="#8a4a14"/><circle cx="142.7" cy="193.2" r="1.5" fill="#d89038"/><circle cx="135.2" cy="187.5" r="1.4" fill="#6a3810"/><circle cx="144.8" cy="191.0" r="2.3" fill="#8a4a14"/><circle cx="119.4" cy="166.0" r="1.5" fill="#d89038"/><circle cx="113.4" cy="153.6" r="2.0" fill="#8a4a14"/><circle cx="153.0" cy="199.8" r="1.7" fill="#8a4a14"/><circle cx="164.9" cy="197.7" r="2.2" fill="#d89038"/><circle cx="132.5" cy="183.2" r="2.0" fill="#8a4a14"/><circle cx="123.7" cy="173.4" r="2.5" fill="#f0c070"/><circle cx="155.5" cy="189.4" r="1.5" fill="#8a4a14"/><circle cx="118.8" cy="164.8" r="2.2" fill="#e0a04a"/><circle cx="128.5" cy="176.5" r="2.3" fill="#f0c070"/><circle cx="155.3" cy="188.6" r="2.1" fill="#c88030"/><circle cx="126.1" cy="174.4" r="2.6" fill="#d89038"/><circle cx="126.6" cy="179.6" r="2.5" fill="#8a4a14"/><circle cx="122.1" cy="171.3" r="1.5" fill="#d89038"/><circle cx="131.3" cy="182.0" r="1.8" fill="#f0c070"/><circle cx="124.2" cy="171.1" r="1.3" fill="#f0c070"/><circle cx="136.7" cy="185.4" r="1.8" fill="#e0a04a"/><circle cx="133.5" cy="181.5" r="1.4" fill="#e0a04a"/><circle cx="157.5" cy="190.3" r="1.4" fill="#e0a04a"/><circle cx="128.1" cy="181.6" r="1.7" fill="#d89038"/><circle cx="118.8" cy="164.9" r="2.4" fill="#c88030"/><circle cx="120.8" cy="167.3" r="2.0" fill="#6a3810"/><circle cx="141.9" cy="183.5" r="2.3" fill="#e0a04a"/><circle cx="124.8" cy="176.6" r="2.5" fill="#f0c070"/><circle cx="144.4" cy="194.5" r="2.1" fill="#e0a04a"/><circle cx="120.5" cy="167.4" r="1.9" fill="#e0a04a"/><circle cx="127.6" cy="178.6" r="2.1" fill="#f0c070"/><circle cx="119.0" cy="164.7" r="2.6" fill="#e0a04a"/><circle cx="121.2" cy="168.0" r="2.1" fill="#f0c070"/><circle cx="133.4" cy="180.4" r="2.0" fill="#8a4a14"/><circle cx="119.7" cy="166.4" r="2.6" fill="#e0a04a"/><circle cx="112.6" cy="151.8" r="2.0" fill="#6a3810"/><circle cx="121.3" cy="169.4" r="1.4" fill="#8a4a14"/><circle cx="152.5" cy="192.3" r="2.0" fill="#8a4a14"/><circle cx="162.1" cy="203.2" r="2.2" fill="#f0c070"/><circle cx="163.3" cy="193.0" r="2.2" fill="#c88030"/><circle cx="124.3" cy="175.7" r="2.4" fill="#e0a04a"/><circle cx="117.5" cy="161.2" r="1.9" fill="#f0c070"/><circle cx="118.9" cy="164.6" r="2.4" fill="#8a4a14"/><circle cx="141.8" cy="186.2" r="2.2" fill="#d89038"/><circle cx="114.3" cy="155.4" r="1.9" fill="#f0c070"/><circle cx="128.3" cy="182.1" r="1.7" fill="#6a3810"/><circle cx="120.3" cy="167.2" r="1.8" fill="#d89038"/><circle cx="115.0" cy="155.9" r="1.7" fill="#8a4a14"/><circle cx="140.7" cy="185.2" r="1.4" fill="#e0a04a"/><circle cx="149.8" cy="187.1" r="1.4" fill="#6a3810"/><circle cx="114.8" cy="156.0" r="1.4" fill="#d89038"/><circle cx="166.0" cy="202.0" r="2.2" fill="#d89038"/><circle cx="149.9" cy="198.1" r="2.3" fill="#8a4a14"/><circle cx="146.7" cy="191.3" r="2.2" fill="#f0c070"/><circle cx="138.1" cy="181.1" r="2.5" fill="#c88030"/><circle cx="143.4" cy="193.1" r="1.5" fill="#6a3810"/><circle cx="135.7" cy="185.5" r="2.4" fill="#e0a04a"/><circle cx="142.4" cy="194.6" r="2.5" fill="#c88030"/>
<circle cx="190.6" cy="196.4" r="1.9" fill="#8a4a14"/><circle cx="210.8" cy="189.3" r="1.9" fill="#6a3810"/><circle cx="198.7" cy="188.6" r="1.7" fill="#8a4a14"/><circle cx="172.5" cy="201.0" r="2.1" fill="#c88030"/><circle cx="197.8" cy="193.2" r="2.2" fill="#8a4a14"/><circle cx="198.8" cy="188.0" r="2.4" fill="#e0a04a"/><circle cx="171.2" cy="183.9" r="2.1" fill="#d89038"/><circle cx="206.9" cy="192.1" r="2.4" fill="#6a3810"/><circle cx="194.0" cy="198.4" r="1.3" fill="#8a4a14"/><circle cx="172.2" cy="197.6" r="2.6" fill="#8a4a14"/><circle cx="217.8" cy="204.0" r="1.6" fill="#c88030"/><circle cx="205.9" cy="196.2" r="1.4" fill="#e0a04a"/><circle cx="206.3" cy="193.7" r="1.8" fill="#f0c070"/><circle cx="215.9" cy="204.0" r="1.6" fill="#e0a04a"/><circle cx="214.4" cy="186.5" r="2.6" fill="#8a4a14"/><circle cx="187.9" cy="185.6" r="1.6" fill="#c88030"/><circle cx="201.7" cy="192.1" r="1.7" fill="#f0c070"/><circle cx="216.2" cy="202.1" r="1.5" fill="#e0a04a"/><circle cx="203.4" cy="185.0" r="2.3" fill="#8a4a14"/><circle cx="176.9" cy="195.7" r="2.0" fill="#8a4a14"/><circle cx="217.3" cy="202.4" r="2.1" fill="#8a4a14"/><circle cx="173.8" cy="192.5" r="1.3" fill="#d89038"/><circle cx="211.2" cy="206.6" r="1.7" fill="#6a3810"/><circle cx="212.2" cy="189.8" r="2.6" fill="#8a4a14"/><circle cx="198.1" cy="197.2" r="2.6" fill="#e0a04a"/><circle cx="178.7" cy="189.2" r="1.7" fill="#6a3810"/><circle cx="182.8" cy="185.4" r="1.6" fill="#e0a04a"/><circle cx="199.8" cy="184.9" r="1.8" fill="#f0c070"/><circle cx="190.7" cy="205.2" r="2.4" fill="#8a4a14"/><circle cx="174.8" cy="191.8" r="1.5" fill="#c88030"/><circle cx="213.4" cy="203.3" r="2.2" fill="#d89038"/><circle cx="175.9" cy="197.2" r="1.6" fill="#6a3810"/><circle cx="215.5" cy="204.8" r="1.4" fill="#6a3810"/><circle cx="170.4" cy="185.5" r="2.6" fill="#6a3810"/><circle cx="179.9" cy="199.1" r="1.8" fill="#f0c070"/><circle cx="213.2" cy="196.1" r="1.5" fill="#6a3810"/><circle cx="204.0" cy="186.3" r="1.9" fill="#d89038"/><circle cx="200.7" cy="198.2" r="1.7" fill="#e0a04a"/><circle cx="213.9" cy="189.8" r="1.4" fill="#e0a04a"/><circle cx="188.6" cy="189.5" r="1.5" fill="#e0a04a"/><circle cx="186.4" cy="196.5" r="1.4" fill="#d89038"/><circle cx="174.9" cy="193.3" r="2.2" fill="#f0c070"/><circle cx="202.6" cy="197.6" r="2.1" fill="#d89038"/><circle cx="214.2" cy="195.8" r="2.2" fill="#f0c070"/><circle cx="216.1" cy="185.9" r="1.4" fill="#c88030"/><circle cx="171.4" cy="190.0" r="2.6" fill="#d89038"/><circle cx="171.8" cy="195.2" r="1.4" fill="#c88030"/><circle cx="214.8" cy="201.6" r="2.3" fill="#d89038"/><circle cx="213.8" cy="193.0" r="1.9" fill="#c88030"/><circle cx="171.9" cy="202.1" r="2.4" fill="#e0a04a"/><circle cx="196.6" cy="198.2" r="1.8" fill="#8a4a14"/><circle cx="168.6" cy="184.6" r="2.1" fill="#e0a04a"/><circle cx="217.7" cy="204.8" r="1.7" fill="#c88030"/><circle cx="214.7" cy="200.6" r="1.9" fill="#8a4a14"/><circle cx="209.9" cy="186.9" r="1.3" fill="#6a3810"/><circle cx="198.1" cy="195.1" r="2.5" fill="#d89038"/><circle cx="173.6" cy="200.4" r="2.5" fill="#c88030"/><circle cx="180.8" cy="183.9" r="1.5" fill="#f0c070"/><circle cx="198.6" cy="195.9" r="2.2" fill="#f0c070"/><circle cx="190.1" cy="203.7" r="1.8" fill="#f0c070"/>
<!-- chocolate -->
<path d="M0 185 L22 178 L56 205 L40 222 L36 250 L0 262 Z" fill="#20110d"/>
<path d="M14 200 L50 196 L56 210 L24 226 Z" fill="#341c15"/>
<path d="M0 292 L34 286 L40 306 L0 318 Z" fill="#1c1411"/>
<!-- utensils -->
<path d="M26 192 L80 208 L78 213 L24 197 Z" fill="#3c332d"/>
<path d="M76 208 Q100 200 112 214 L128 224 Q126 232 108 230 L80 226 Q72 218 76 208Z" fill="#5a5046"/>
<path d="M48 222 L58 218 L124 256 L118 261 Z" fill="#3a342f"/>
<!-- strawberries -->
<path d="M54 180 Q58 170 68 173 Q80 176 78 186 Q74 198 64 197 Q52 192 54 180 Z" fill="url(#stw)"/>
<path d="M87 182 Q92 174 100 177 Q108 182 104 190 Q98 198 92 196 Q85 192 87 182 Z" fill="url(#stw)"/>
<path d="M71 254 Q74 242 86 244 Q100 246 100 258 Q96 272 84 273 Q70 268 71 254 Z" fill="url(#stw)"/>
<ellipse cx="8" cy="274" rx="12" ry="9" fill="#6e1010"/>
<!-- petals & crumbs -->
<g fill="#862a56"><ellipse cx="112.6" cy="276.6" rx="3.6" ry="1.1" transform="rotate(137 112.6 276.6)"/><ellipse cx="93.7" cy="295.6" rx="4.3" ry="1.3" transform="rotate(22 93.7 295.6)"/><ellipse cx="121.6" cy="273.1" rx="2.2" ry="1.5" transform="rotate(144 121.6 273.1)"/><ellipse cx="96.2" cy="294.8" rx="3.6" ry="2.1" transform="rotate(147 96.2 294.8)"/><ellipse cx="134.0" cy="272.2" rx="2.6" ry="1.7" transform="rotate(34 134.0 272.2)"/><ellipse cx="109.7" cy="276.3" rx="2.3" ry="1.4" transform="rotate(174 109.7 276.3)"/><ellipse cx="100.8" cy="295.6" rx="3.6" ry="1.4" transform="rotate(140 100.8 295.6)"/><ellipse cx="144.4" cy="294.8" rx="3.5" ry="1.6" transform="rotate(136 144.4 294.8)"/><ellipse cx="121.1" cy="283.8" rx="3.5" ry="1.5" transform="rotate(76 121.1 283.8)"/><ellipse cx="106.4" cy="277.9" rx="3.9" ry="1.1" transform="rotate(76 106.4 277.9)"/><ellipse cx="129.1" cy="308.5" rx="3.8" ry="1.3" transform="rotate(18 129.1 308.5)"/><ellipse cx="95.7" cy="288.4" rx="3.9" ry="1.2" transform="rotate(125 95.7 288.4)"/><ellipse cx="120.6" cy="312.3" rx="2.2" ry="1.7" transform="rotate(80 120.6 312.3)"/><ellipse cx="113.9" cy="285.4" rx="3.2" ry="2.0" transform="rotate(17 113.9 285.4)"/><ellipse cx="154.9" cy="311.6" rx="3.2" ry="1.8" transform="rotate(15 154.9 311.6)"/><ellipse cx="146.0" cy="283.6" rx="3.4" ry="1.8" transform="rotate(114 146.0 283.6)"/><ellipse cx="109.3" cy="287.0" rx="3.7" ry="1.0" transform="rotate(118 109.3 287.0)"/><ellipse cx="115.1" cy="296.9" rx="3.2" ry="1.3" transform="rotate(73 115.1 296.9)"/><ellipse cx="96.6" cy="295.9" rx="3.0" ry="2.0" transform="rotate(20 96.6 295.9)"/><ellipse cx="99.6" cy="287.7" rx="2.7" ry="1.2" transform="rotate(110 99.6 287.7)"/><ellipse cx="156.8" cy="282.3" rx="3.0" ry="1.4" transform="rotate(97 156.8 282.3)"/><ellipse cx="164.5" cy="276.6" rx="2.4" ry="1.3" transform="rotate(59 164.5 276.6)"/><ellipse cx="87.0" cy="306.6" rx="2.5" ry="1.3" transform="rotate(37 87.0 306.6)"/><ellipse cx="120.4" cy="286.2" rx="3.4" ry="2.1" transform="rotate(176 120.4 286.2)"/><ellipse cx="156.5" cy="311.8" rx="3.6" ry="1.9" transform="rotate(116 156.5 311.8)"/><ellipse cx="159.8" cy="304.3" rx="4.2" ry="2.0" transform="rotate(100 159.8 304.3)"/><ellipse cx="118.6" cy="287.3" rx="3.2" ry="1.5" transform="rotate(48 118.6 287.3)"/><ellipse cx="91.5" cy="294.2" rx="2.4" ry="1.4" transform="rotate(13 91.5 294.2)"/><ellipse cx="94.4" cy="294.9" rx="3.3" ry="2.1" transform="rotate(157 94.4 294.9)"/><ellipse cx="88.1" cy="308.5" rx="3.5" ry="1.2" transform="rotate(64 88.1 308.5)"/><ellipse cx="164.3" cy="296.5" rx="3.2" ry="1.1" transform="rotate(124 164.3 296.5)"/><ellipse cx="167.4" cy="290.5" rx="3.2" ry="1.1" transform="rotate(26 167.4 290.5)"/><ellipse cx="147.5" cy="302.6" rx="3.2" ry="1.8" transform="rotate(132 147.5 302.6)"/><ellipse cx="87.9" cy="311.8" rx="3.3" ry="1.2" transform="rotate(139 87.9 311.8)"/></g>
<g fill="#9a7446"><circle cx="157.3" cy="277.7" r="1.7"/><circle cx="148.6" cy="260.4" r="2.6"/><circle cx="144.6" cy="281.6" r="1.8"/><circle cx="135.1" cy="272.1" r="2.0"/><circle cx="148.4" cy="273.9" r="2.5"/><circle cx="152.3" cy="263.1" r="1.6"/><circle cx="140.8" cy="278.9" r="1.5"/><circle cx="143.8" cy="277.0" r="2.8"/><circle cx="153.3" cy="270.3" r="1.5"/><circle cx="147.4" cy="267.0" r="2.5"/><circle cx="151.1" cy="267.1" r="2.8"/><circle cx="130.6" cy="260.7" r="2.0"/><circle cx="138.8" cy="270.5" r="2.8"/><circle cx="147.5" cy="258.0" r="2.7"/><circle cx="139.0" cy="274.7" r="2.5"/><circle cx="131.8" cy="268.1" r="2.3"/></g>
</g>
<rect y="140" width="218" height="60" fill="url(#tfade)"/>
</g>
</defs>
<use href="#phc"/>

</svg>
<svg style="left:943px;top:391px" width="222" height="334" viewBox="0 0 222 334"><rect x="1.500" y="1.500" width="219" height="331" fill="none" stroke="#8a8a8a" stroke-width="1" stroke-dasharray="3 2"/></svg>
<svg id="handles" style="left:925px;top:315px" width="260" height="430" viewBox="925 315 260 430">
<defs><linearGradient id="ghd" x1="0" y1="0" x2="0" y2="1"><stop offset="0" stop-color="#f0553a"/><stop offset=".5" stop-color="#ea4026"/><stop offset=".55" stop-color="#e02c14"/><stop offset="1" stop-color="#e63a22"/></linearGradient></defs>
<line x1="1053.5" y1="331" x2="1053.5" y2="384" stroke="#777" stroke-width="1" stroke-dasharray="3 1"/>
<g fill="url(#ghd)" stroke="#cf2a14" stroke-width=".6" stroke-linejoin="round">
<path d="M1034.500 324.200 L1040.500 328.500 Q1053.300 316 1066.200 328.500 L1072 324.200 L1072 338.400 L1058.400 338.400 L1062.500 334 Q1053.300 325.500 1044 334 L1048.200 338.400 L1034.500 338.400 Z"/>
<path d="M1053.400 383.600 L1062.300 393.600 L1057 393.600 L1057 401.400 L1050 401.400 L1050 393.600 L1044.400 393.600 Z"/>
<path d="M1053.400 732.600 L1062.300 722.600 L1057 722.600 L1057 714.700 L1050 714.700 L1050 722.600 L1044.400 722.600 Z"/>
<path d="M935 557.500 L945 548.500 L945 554 L953 554 L953 561 L945 561 L945 566.500 Z"/>
<path d="M935.5 384.0 L949.5 384.0 L945.5 388.0 L952.5 395.5 L948.0 400.5 L940.5 393.0 L935.5 398.0 Z"/>
<path d="M935.2 732.6 L949.2 732.6 L945.2 728.6 L952.2 721.1 L947.7 716.1 L940.2 723.6 L935.2 718.6 Z"/>
<path d="M1171.8 732.6 L1157.8 732.6 L1161.8 728.6 L1154.8 721.1 L1159.3 716.1 L1166.8 723.6 L1171.8 718.6 Z"/>
</g>
</svg>
<!--PHOTOEND-->
<!--RIGHTEND-->
<div id="sline"></div><div style="left:0;top:947px;width:1523px;height:5px;background:#4b4b4b"></div>
<div id="status">
<span class="t st" style="left:13px">Проект:  Новый проект</span>
<span class="t st" style="left:513px">Размер:  3508x2480</span>
<span class="t st" style="left:701px">Слоев:  2</span>
<span class="t st" style="left:825px">Для вызова справки нажмите F1.</span>
<span class="t st" style="left:1178px;color:#777">Уместить</span>
<div class="sd" style="left:505px"></div><div class="sd" style="left:692px"></div><div class="sd" style="left:817px"></div><div class="sd" style="left:1093px"></div>
<div id="fit"><svg style="left:0;top:0" width="18" height="18" viewBox="0 0 18 18"><path d="M10 4.500 H13.500 V8 M13.500 4.500 L10.500 7.500 M8 13.500 H4.500 V10 M4.500 13.500 L7.500 10.500" fill="none" stroke="#6a6a6a" stroke-width="1"/></svg></div>
<div class="circ" style="left:1298px"><div style="left:5px;top:8px;width:9px;height:3px;background:#111"></div></div>
<div id="combo"><span class="t" style="left:6px;top:6.500px;color:#000;font-size:15.4px">100%</span><div id="cbtn"><div class="dd" style="left:6px;top:8px;border-left-width:4px;border-right-width:4px;border-top:4px solid #3c3c3c"></div></div></div>
<div class="circ" style="left:1494px"><div style="left:5px;top:8.250px;width:9px;height:2.500px;background:#111"></div><div style="left:8.250px;top:5px;width:2.500px;height:9px;background:#111"></div></div>
</div>
<!--STATUSEND-->
<div id="cm">
<div id="gut"></div>
<div class="sep" style="top:508px"></div>
<!--CMI-->
<svg id="cmi" style="left:0;top:0" width="42" height="548" viewBox="1106 129 42 548">
<!-- scissors -->
<path d="M1114 135.500 L1127.500 152" stroke="#c8c8c8" stroke-width="1.600"/><path d="M1126 135 L1124.500 150" stroke="#e8e8e8" stroke-width="1.800"/><path d="M1126 135 L1124.500 150" stroke="#9a9a9a" stroke-width=".6"/>
<ellipse cx="1124.300" cy="156.500" rx="2" ry="5.500" fill="none" stroke="#3a3a3a" stroke-width="1.500" transform="rotate(8 1124.300 156.500)"/>
<ellipse cx="1133.300" cy="153.500" rx="2" ry="5.500" fill="none" stroke="#3a3a3a" stroke-width="1.500" transform="rotate(-52 1133.300 153.500)"/>
<!-- X -->
<path d="M1115 243 L1125.800 252 L1136.600 243 L1140 246.600 L1130 256.200 L1140 265.800 L1136.600 269.600 L1125.800 260.400 L1115 269.600 L1111.600 265.800 L1121.600 256.200 L1111.600 246.600 Z" fill="url(#gx)" stroke="#d81616" stroke-width="1"/>
<!-- photo -->
<g transform="translate(1093 74)"><use href="#iph"/></g>
<!-- crop -->
<g stroke="#8db6de" stroke-width="2.800" fill="none"><path d="M1119 311 V339.500 H1141"/><path d="M1111.600 318 H1134 V346.400"/><path d="M1119.500 339 L1139 312"/></g>
<!-- layers -->
<rect x="1121.500" y="437.800" width="18.900" height="14.200" fill="#f2f2f2" stroke="#b0b0b0" stroke-width=".9"/><rect x="1111.900" y="425" width="20.600" height="20.600" fill="url(#gbl)" stroke="#5b9ad2" stroke-width="1"/>
<!-- palette -->
<g transform="translate(1093.500 -321)"><use href="#ipal"/></g>
<!-- gear -->
<path d="M1140.800 654.500 L1140.800 659.500 L1136.700 659.500 L1135.500 662.500 L1138.400 665.300 L1134.800 668.900 L1132 666 L1129 667.200 L1129 671.300 L1124 671.300 L1124 667.200 L1121 666 L1118.200 668.900 L1114.600 665.300 L1117.500 662.500 L1116.300 659.500 L1112.200 659.500 L1112.200 654.500 L1116.300 654.500 L1117.500 651.500 L1114.600 648.700 L1118.200 645.100 L1121 648 L1124 646.800 L1124 642.700 L1129 642.700 L1129 646.800 L1132 648 L1134.800 645.100 L1138.400 648.700 L1135.500 651.500 L1136.700 654.500 Z M1131 657 A4.500 4.500 0 1 0 1122 657 A4.500 4.500 0 1 0 1131 657 Z" fill="#b7dcfa" stroke="#6fb0ea" stroke-width="1" fill-rule="evenodd" stroke-linejoin="round"/>
</svg>
<!--CMIEND-->
<div id="hl"></div>
<span class="t mi" style="top:13px">Вырезать</span><span class="t sc" style="top:13px">Ctrl+X</span>
<span class="t mi" style="top:48px">Копировать</span><span class="t sc" style="top:48px">Ctrl+C</span>
<span class="t mi g" style="top:83px">Вставить</span><span class="t sc g" style="top:83px">Ctrl+V</span>
<div class="sep" style="top:108px"></div>
<span class="t mi" style="top:120px">Удалить</span><span class="t sc" style="top:120px">Del</span>
<div class="sep" style="top:145px"></div>
<span class="t mi" style="top:158px">Заменить фото</span>
<div class="sep" style="top:182.500px"></div>
<span class="t mi" style="top:195px">Кадрировать изображение</span>
<span class="t mi" style="top:230px">Повернуть</span><div class="ar" style="top:232px"></div>
<span class="t mi" style="top:265px">Отразить</span><div class="ar" style="top:267px"></div>
<div class="sep" style="top:290.500px"></div>
<span class="t mi" style="top:303px">Порядок слоёв</span><div class="ar" style="top:305px"></div>
<span class="t mi" style="top:338px">Центрировать</span><div class="ar" style="top:340px"></div>
<div class="sep" style="top:363px"></div>
<span class="t mi" style="top:375px">Оформление</span><div class="ar" style="top:377px"></div>
<span class="t mi" style="top:410px">Форма слоя</span>
<span class="t mi" style="top:445px">Сохранять пропорции</span>
<div class="sep" style="top:470px"></div>
<span class="t mi" style="top:483px">Сделать фоном страницы</span>
<span class="t mi" style="top:520px">Свойства изображения</span>
</div>
<!--MENUEND-->
</body>
</html>
